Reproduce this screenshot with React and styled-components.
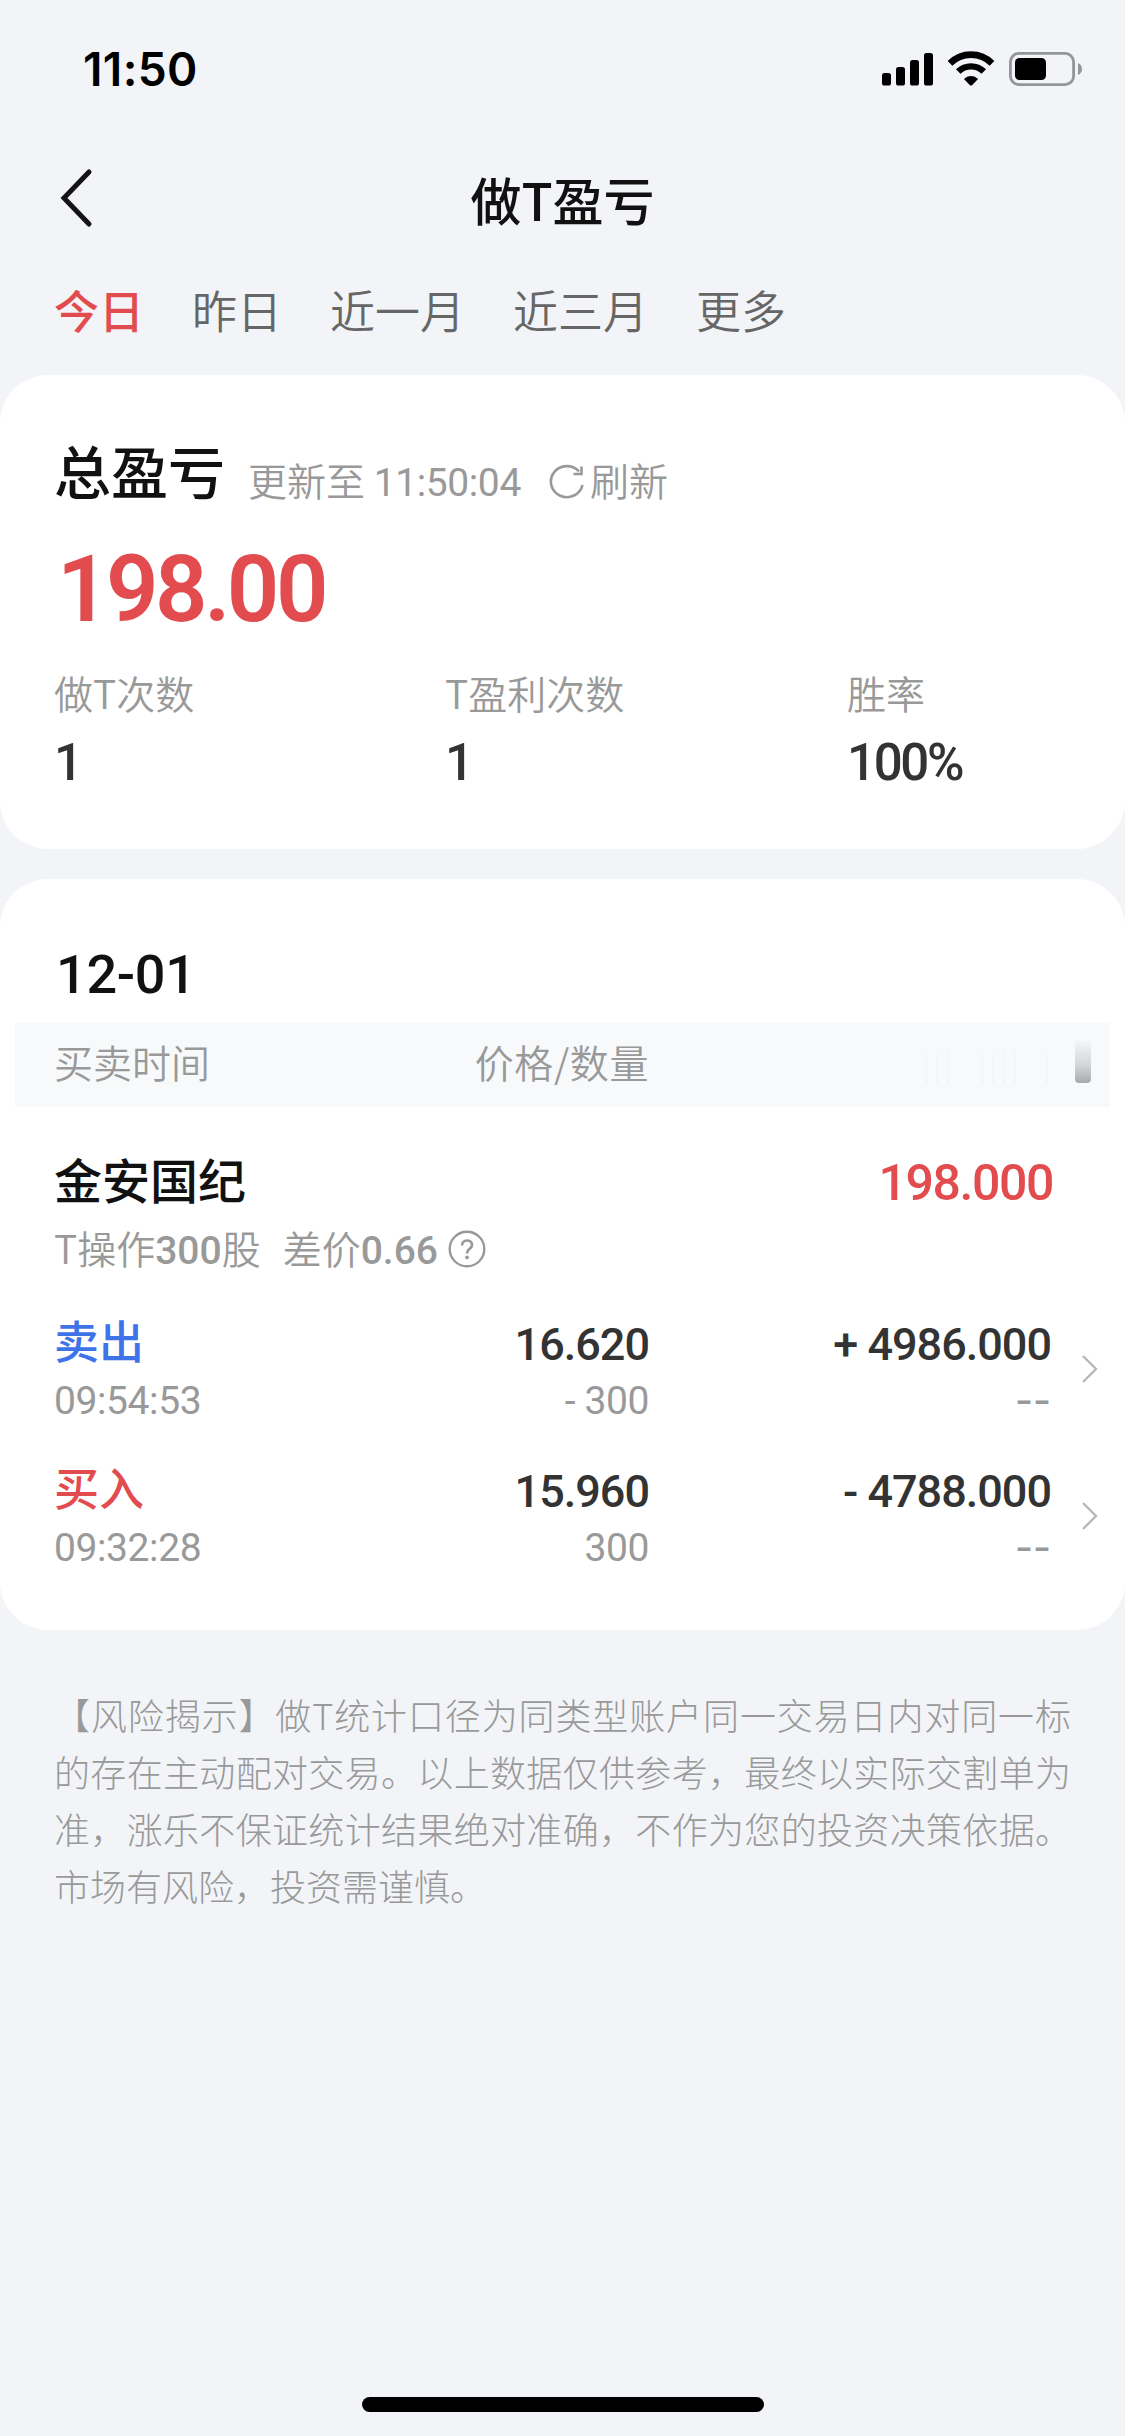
import React, { useState } from "react";
import styled, { createGlobalStyle } from "styled-components";

const tabs = ["今日", "昨日", "近一月", "近三月", "更多"];

const stats = [
  { label: "做T次数", value: "1" },
  { label: "T盈利次数", value: "1" },
  { label: "胜率", value: "100%" },
];

const trades = [
  {
    side: "sell",
    name: "卖出",
    time: "09:54:53",
    price: "16.620",
    count: "- 300",
    amount: "+ 4986.000",
  },
  {
    side: "buy",
    name: "买入",
    time: "09:32:28",
    price: "15.960",
    count: "300",
    amount: "- 4788.000",
  },
];

const App = () => {
  const [active, setActive] = useState("今日");

  return (
    <>
      <GlobalStyle />
      <Screen>
        <StatusBar>
          <Clock>11:50</Clock>
          <StatusIcons />
        </StatusBar>

        <NavBar>
          <BackButton type="button" aria-label="返回">
            <svg width="36" height="60" viewBox="0 0 36 60" fill="none">
              <path
                d="M32 4 L7 30 L32 56"
                stroke="#141414"
                strokeWidth="5"
                strokeLinecap="round"
              />
            </svg>
          </BackButton>
          <Title>做T盈亏</Title>
        </NavBar>

        <Tabs>
          {tabs.map((tab) => (
            <Tab
              key={tab}
              type="button"
              $active={tab === active}
              onClick={() => setActive(tab)}
            >
              {tab}
            </Tab>
          ))}
        </Tabs>

        <SummaryCard>
          <SummaryHead>
            <SummaryTitle>总盈亏</SummaryTitle>
            <Updated>
              更新至 <Time>11:50:04</Time>
            </Updated>
            <Refresh type="button">
              <svg width="36" height="36" viewBox="0 0 36 36" fill="none">
                <path
                  d="M33.5 21 A16 15.5 0 1 1 30 7.5"
                  stroke="#999"
                  strokeWidth="2.6"
                />
                <path d="M32.5 2.5 V10 H24.5" stroke="#999" strokeWidth="2.6" />
              </svg>
              刷新
            </Refresh>
          </SummaryHead>
          <Total>198.00</Total>
          <Stats>
            {stats.map((s) => (
              <div key={s.label}>
                <StatLabel>{s.label}</StatLabel>
                <StatValue>{s.value}</StatValue>
              </div>
            ))}
          </Stats>
        </SummaryCard>

        <DayCard>
          <Day>12-01</Day>
          <TableHead>
            <span>买卖时间</span>
            <HeadPrice>价格/数量</HeadPrice>
            <Smears>
              <Smear $width={38} />
              <Smear $width={47} />
              <Smear $width={15} />
            </Smears>
            <Thumb />
          </TableHead>
          <Stock>
            <StockName>金安国纪</StockName>
            <StockProfit>198.000</StockProfit>
          </Stock>
          <StockNote>
            <span>
              T操作<NoteNumber>300</NoteNumber>股
            </span>
            <Diff>
              差价<NoteNumber>0.66</NoteNumber>
            </Diff>
            <HelpIcon width="38" height="38" viewBox="0 0 38 38" fill="none">
              <circle cx="19" cy="19" r="17.3" stroke="#999" strokeWidth="2.4" />
              <path
                d="M14 15.5 C14 8.8 24 8.8 24 15.2 C24 18.8 19 18.6 19 23.4"
                stroke="#999"
                strokeWidth="2.6"
              />
              <circle cx="19" cy="27.4" r="1.9" fill="#999" />
            </HelpIcon>
          </StockNote>
          {trades.map((t) => (
            <Trade key={t.side}>
              <div>
                <Side $side={t.side}>{t.name}</Side>
                <Sub>{t.time}</Sub>
              </div>
              <Cell>
                <Figure>{t.price}</Figure>
                <Sub>{t.count}</Sub>
              </Cell>
              <Cell>
                <Figure>{t.amount}</Figure>
                <Dashes>--</Dashes>
              </Cell>
              <Arrow width="20" height="32" viewBox="0 0 20 32" fill="none">
                <path d="M3 3 L16 16 L3 29" stroke="#b8b8b8" strokeWidth="2.4" />
              </Arrow>
            </Trade>
          ))}
        </DayCard>

        <Risk lang="zh-CN">
          【风险揭示】做T统计口径为同类型账户同一交易日内对同一标的存在主动配对交易。以上数据仅供参考，最终以实际交割单为准，涨乐不保证统计结果绝对准确，不作为您的投资决策依据。市场有风险，投资需谨慎。
        </Risk>

        <HomeBar />
      </Screen>
    </>
  );
};

const StatusIcons = () => (
  <svg width="204" height="40" viewBox="0 0 204 40">
    <rect x="0" y="23" width="9" height="12.5" rx="2.6" />
    <rect x="14" y="17" width="9" height="18.5" rx="2.6" />
    <rect x="28" y="10" width="9" height="25.5" rx="2.6" />
    <rect x="42" y="3" width="9" height="32.5" rx="2.6" />
    <g fill="none" stroke="#000">
      <path d="M68 13.4 A29.5 29.5 0 0 1 110 13.4" strokeWidth="6.6" />
      <path d="M76.2 21.6 A18.2 18.2 0 0 1 101.8 21.6" strokeWidth="6.4" />
    </g>
    <path d="M82.4 29.6 Q82 28.9 82.8 28.2 A10 10 0 0 1 95.2 28.2 Q96 28.9 95.6 29.6 L90 35.2 Q89 36 88 35.2 Z" />
    <rect
      x="128.4"
      y="3.4"
      width="63.2"
      height="31.2"
      rx="8.5"
      fill="none"
      stroke="#949599"
      strokeWidth="2.8"
    />
    <rect x="133" y="8" width="31" height="22" rx="4.5" />
    <path d="M196 13 Q200 15 200 19 Q200 23 196 25 Z" fill="#949599" />
  </svg>
);

export default App;

const cjk = `"Noto Sans CJK SC", sans-serif`;
const digits = `Roboto, "Noto Sans CJK SC", sans-serif`;

const GlobalStyle = createGlobalStyle`
  body {
    margin: 0;
    background: #f2f4f8;
  }
  * {
    box-sizing: border-box;
  }
  button {
    padding: 0;
    border: none;
    background: none;
    font: inherit;
    color: inherit;
  }
`;

const Screen = styled.div`
  display: flex;
  flex-direction: column;
  width: 1125px;
  height: 2436px;
  overflow: hidden;
  background: #f2f4f8;
  font-family: ${cjk};
  font-weight: 350;
  white-space: nowrap;
`;

const StatusBar = styled.div`
  display: flex;
  justify-content: space-between;
  height: 132px;
  padding: 50px 39px 0 83px;
`;

const Clock = styled.div`
  font-family: Inter, sans-serif;
  font-size: 46px;
  font-weight: 600;
  line-height: 38px;
  letter-spacing: 0.4px;
  color: #000;
`;

const NavBar = styled.div`
  display: grid;
  grid-template-columns: 1fr auto 1fr;
  align-items: center;
  height: 132px;
  padding: 0 54px;
`;

const BackButton = styled.button`
  justify-self: start;
  display: flex;
  margin-left: 3px;
`;

const Title = styled.div`
  padding-top: 2px;
  font-size: 51px;
  font-weight: 500;
  line-height: 130px;
  color: #111;
`;

const Tabs = styled.div`
  display: flex;
  gap: 48px;
  height: 111px;
  padding: 0 54px;
`;

const Tab = styled.button`
  height: 90px;
  line-height: 91px;
  font-size: 45px;
  font-weight: ${({ $active }) => ($active ? 450 : 350)};
  color: ${({ $active }) => ($active ? "#e24c4f" : "#666")};
`;

const Card = styled.section`
  border-radius: 48px;
  background: #fff;
`;

const SummaryCard = styled(Card)`
  height: 474px;
  padding: 53px 54px 0;
`;

const SummaryHead = styled.div`
  display: flex;
  height: 80px;
  font-size: 39px;
  line-height: 102px;
  color: #999;
`;

const SummaryTitle = styled.div`
  width: 194px;
  font-size: 57px;
  font-weight: 500;
  line-height: 82px;
  color: #111;
`;

const Updated = styled.div`
  width: 301px;
`;

const Time = styled.span`
  font-family: ${digits};
  font-weight: 400;
  line-height: 1;
  letter-spacing: -0.4px;
`;

const Refresh = styled.button`
  display: flex;
  height: 102px;
  align-items: center;
  gap: 5px;
  font-weight: 350;

  svg {
    margin-top: 5px;
  }
`;

const Total = styled.div`
  margin: 42px 0 37px 3px;
  font-family: ${digits};
  font-size: 92px;
  font-weight: 600;
  line-height: 80px;
  letter-spacing: -3.5px;
  color: #e24c4f;
`;

const Stats = styled.div`
  display: grid;
  grid-template-columns: 391px 402px auto;
`;

const StatLabel = styled.div`
  margin-bottom: 21px;
  font-size: 39px;
  line-height: 50px;
  color: #999;
`;

const StatValue = styled.div`
  font-family: ${digits};
  font-size: 51px;
  font-weight: 500;
  line-height: 50px;
  letter-spacing: -2.3px;
  color: #333;
`;

const DayCard = styled(Card)`
  height: 751px;
  margin-top: 30px;
  padding-top: 65px;
`;

const Day = styled.div`
  padding-left: 56px;
  font-family: ${digits};
  font-size: 54px;
  font-weight: 500;
  line-height: 62px;
  letter-spacing: -0.3px;
  color: #111;
`;

const TableHead = styled.div`
  display: flex;
  align-items: center;
  height: 84px;
  margin: 17px 15px 0;
  padding: 0 19px 8px 39px;
  background: #f7f9fb;
  font-size: 39px;
  color: #999;
`;

const HeadPrice = styled.span`
  width: 439px;
  text-align: right;
  letter-spacing: 0.6px;
`;

const Smears = styled.div`
  flex: 1;
  display: flex;
  justify-content: flex-end;
  gap: 18px;
  margin: 4px 20px 0 0;
`;

const Smear = styled.div`
  width: ${({ $width }) => $width}px;
  height: 42px;
  background: repeating-linear-gradient(
    90deg,
    rgba(255, 255, 255, 0.3) 0 3px,
    rgba(255, 255, 255, 0) 3px 6px,
    rgba(238, 239, 241, 0.45) 6px 8px,
    rgba(255, 255, 255, 0) 8px 11px
  );
  mask-image: linear-gradient(transparent, #000);
`;

const Thumb = styled.div`
  width: 16px;
  height: 42px;
  margin-top: 2px;
  border-radius: 0 0 4px 4px;
  background: linear-gradient(#f4f5f6, #d6d7d8 55%, #a9aaab);
`;

const Stock = styled.div`
  display: flex;
  justify-content: space-between;
  height: 60px;
  margin: 41px 72px 14px 54px;
`;

const StockName = styled.div`
  font-size: 48px;
  font-weight: 500;
  line-height: 60px;
  color: #111;
`;

const StockProfit = styled.div`
  font-family: ${digits};
  font-size: 50px;
  font-weight: 500;
  line-height: 71px;
  letter-spacing: -1.4px;
  color: #e24c4f;
`;

const StockNote = styled.div`
  display: flex;
  align-items: center;
  height: 50px;
  margin-bottom: 26px;
  padding-left: 54px;
  font-size: 39px;
  line-height: 50px;
  color: #999;
`;

const NoteNumber = styled.span`
  font-family: ${digits};
  font-weight: 500;
  line-height: 1;
`;

const Diff = styled.span`
  margin: 0 10px 0 22px;
`;

const HelpIcon = styled.svg`
  margin-top: 4px;
`;

const Trade = styled.div`
  display: grid;
  grid-template-columns: 294px 301px 402px 1fr;
  height: 147px;
  padding: 11px 0 0 54px;
`;

const Side = styled.div`
  height: 66px;
  font-size: 45px;
  font-weight: 450;
  line-height: 62px;
  color: ${({ $side }) => ($side === "sell" ? "#3f73e8" : "#e24c4f")};
`;

const Cell = styled.div`
  text-align: right;
`;

const Figure = styled.div`
  height: 66px;
  padding-top: 6px;
  font-family: ${digits};
  font-size: 45px;
  font-weight: 500;
  line-height: 60px;
  letter-spacing: -1px;
  color: #333;
`;

const Sub = styled.div`
  font-family: ${digits};
  font-size: 39px;
  font-weight: 400;
  line-height: 52px;
  letter-spacing: -0.4px;
  color: #999;
`;

const Dashes = styled(Sub)`
  font-family: Inter, sans-serif;
  font-weight: 500;
  line-height: 49px;
  letter-spacing: 0;
`;

const Arrow = styled.svg`
  margin: 44px 0 0 29px;
`;

const Risk = styled.p`
  width: 1017px;
  margin: 56px 0 0 54px;
  font-size: 36px;
  font-weight: 300;
  line-height: 57px;
  text-align: justify;
  white-space: normal;
  color: #999;
`;

const HomeBar = styled.div`
  width: 402px;
  height: 15px;
  margin: auto auto 24px;
  border-radius: 8px;
  background: #000;
`;
